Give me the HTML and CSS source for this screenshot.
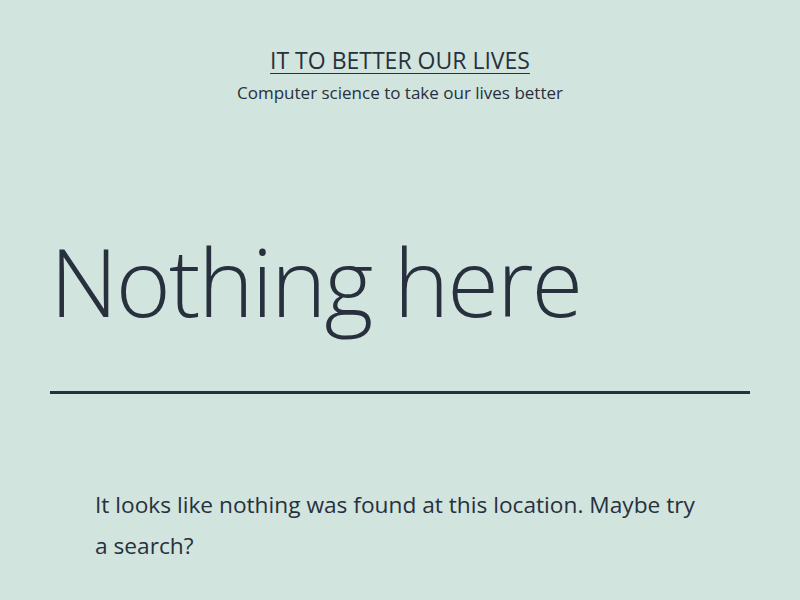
FILE: index.html
```html
<!DOCTYPE html>
<html lang="en">
<head>
<meta charset="utf-8">
<title>Nothing here</title>
<link rel="stylesheet" href="styles.css">
</head>
<body>
<header class="site-header">
  <p class="site-title"><a href="#">IT to better our lives</a></p>
  <p class="site-description">Computer science to take our lives better</p>
</header>
<main class="site-main">
  <header class="page-header">
    <h1 class="page-title">Nothing here</h1>
  </header>
  <div class="page-content">
    <p>It looks like nothing was found at this location. Maybe try a search?</p>
  </div>
</main>
</body>
</html>
```
FILE: styles.css
```css
html, body {
  margin: 0;
  padding: 0;
}
body {
  background: #d1e4dd;
  color: #28303d;
  font-family: "Open Sans", "Noto Sans", sans-serif;
}
.site-header {
  text-align: center;
  padding-top: 45px;
}
.site-title {
  margin: 0;
  font-size: 23px;
  line-height: 30px;
  font-weight: 400;
  text-transform: uppercase;
}
.site-title a {
  color: inherit;
  text-decoration: underline;
  text-decoration-thickness: 1px;
  text-underline-offset: 4px;
}
.site-description {
  margin: 5px 0 0;
  font-size: 17px;
  line-height: 26px;
}
.page-header {
  margin: 122px 50px 0;
  padding-bottom: 57px;
  border-bottom: 3px solid #28303d;
}
.page-title {
  margin: 0;
  font-size: 94px;
  line-height: 106px;
  font-weight: 300;
  letter-spacing: -2px;
}
.page-content {
  max-width: 610px;
  margin: 90px auto 0;
}
.page-content p {
  margin: 0;
  font-size: 22.7px;
  line-height: 41px;
}
```
